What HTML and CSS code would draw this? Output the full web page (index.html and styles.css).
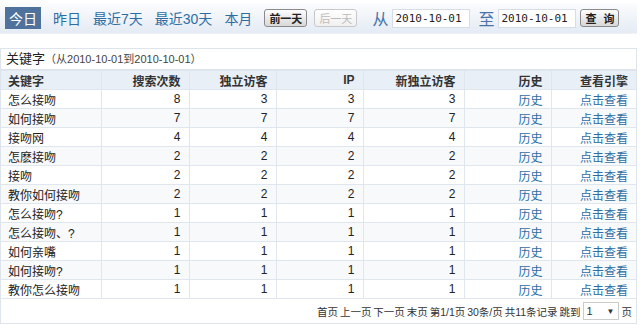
FILE: index.html
```html
<!DOCTYPE html>
<html lang="zh-CN">
<head>
  <meta charset="UTF-8" />
  <title>关键字统计</title>
  <link rel="stylesheet" href="styles.css">
</head>
<body>

<!-- 日期选择 -->
<div class="toolbar">
  <a class="range current">今日</a>
  <a class="range">昨日</a>
  <a class="range">最近7天</a>
  <a class="range">最近30天</a>
  <a class="range">本月</a>
  <button class="btn">前一天</button>
  <button class="btn" disabled>后一天</button>
  <span class="label">从</span>
  <input class="date" type="text" value="2010-10-01">
  <span class="label">至</span>
  <input class="date" type="text" value="2010-10-01">
  <button class="btn query">查 询</button>
</div>

<!-- 关键字列表 -->
<div class="panel">
  <div class="panel-title">关键字<small>（从2010-10-01到2010-10-01）</small></div>
  <table class="grid">
    <colgroup>
      <col style="width: 100px">
      <col style="width: 88px">
      <col style="width: 87px">
      <col style="width: 87px">
      <col style="width: 101px">
      <col style="width: 87px">
      <col>
    </colgroup>
    <thead>
      <tr>
        <th class="kw">关键字</th>
        <th>搜索次数</th>
        <th>独立访客</th>
        <th>IP</th>
        <th>新独立访客</th>
        <th>历史</th>
        <th>查看引擎</th>
      </tr>
    </thead>
    <tbody id="rows"></tbody>
  </table>
  <div class="pager">
    <span>首页 上一页 下一页 末页 第1/1页 30条/页 共11条记录 跳到</span>
    <span class="jump">1 <i>&#9660;</i></span>
    <span>页</span>
  </div>
</div>

<script>
  const keywords = [
    ["怎么接吻", 8, 3, 3, 3],
    ["如何接吻", 7, 7, 7, 7],
    ["接吻网", 4, 4, 4, 4],
    ["怎麽接吻", 2, 2, 2, 2],
    ["接吻", 2, 2, 2, 2],
    ["教你如何接吻", 2, 2, 2, 2],
    ["怎么接吻?", 1, 1, 1, 1],
    ["怎么接吻、?", 1, 1, 1, 1],
    ["如何亲嘴", 1, 1, 1, 1],
    ["如何接吻?", 1, 1, 1, 1],
    ["教你怎么接吻", 1, 1, 1, 1]
  ];

  let tbody = document.getElementById("rows");
  keywords.forEach((k, i) => {
    let tr = document.createElement("tr");
    if (i % 2 === 1) tr.className = "alt";
    tr.innerHTML = `
      <td class="kw">${k[0]}</td>
      <td>${k[1]}</td>
      <td>${k[2]}</td>
      <td>${k[3]}</td>
      <td>${k[4]}</td>
      <td><a>历史</a></td>
      <td><a>点击查看</a></td>
    `;
    tbody.appendChild(tr);
  });
</script>
</body>
</html>
```

FILE: styles.css
```css
body { margin: 0; background: #fff; font-family: "Liberation Sans", "Noto Sans CJK SC", sans-serif; font-size: 12px; color: #333; }
.toolbar { display: flex; align-items: center; height: 30px; margin: 3px 3px 0 0; padding-left: 5px; background: linear-gradient(#fbfcfe, #e4ebf4); border-bottom: 1px solid #eef2f7; white-space: nowrap; }
.toolbar > * { flex-shrink: 0; }
.range { font-size: 14px; color: #2e6da4; margin-right: 12px; }
.range.current { background: #4f729d; color: #fff; padding: 1px 4px; }
.btn { font-family: inherit; font-size: 11px; height: 18px; padding: 0 4px; margin-right: 7px; border: 1px solid #8a8a8a; border-radius: 3px; background: linear-gradient(#fdfdfd, #d8d8d8); color: #222; font-weight: bold; white-space: nowrap; }
.btn[disabled] { color: #bbb; border-color: #c8c8c8; background: linear-gradient(#fff, #f0f0f0); font-weight: normal; }
.label { font-size: 16px; color: #4a74a8; margin: 0 4px 0 8px; }
.date { width: 72px; height: 15px; padding: 1px 2px; border: 1px solid #d6dde6; font-family: "DejaVu Sans Mono", monospace; font-size: 11px; color: #222; }
.query { margin-left: 4px; letter-spacing: 2px; padding: 0 2px 0 4px; }
.panel { margin: 14px 3px 0 0; border: 1px solid #dde4ec; }
.panel-title { height: 20px; line-height: 20px; padding-left: 5px; font-size: 13px; color: #222; border-bottom: 1px solid #dde4ec; }
.panel-title small { font-size: 11px; color: #444; }
.grid { width: 100%; border-collapse: collapse; table-layout: fixed; }
.grid th, .grid td { height: 18px; padding: 0 8px; border: 1px solid #dfe6ee; text-align: right; font-weight: normal; color: #222; white-space: nowrap; }
.grid th { background: #e9eff7; font-weight: bold; color: #333; }
.grid th:first-child, .grid td:first-child { border-left: none; }
.grid th:last-child, .grid td:last-child { border-right: none; }
.grid .kw { text-align: left; padding-left: 7px; }
.grid tr.alt td { background: #f7f9fb; }
.grid a { color: #2e6da4; }
.pager { display: flex; align-items: center; justify-content: flex-end; height: 24px; padding-right: 4px; font-size: 10.5px; word-spacing: -1px; color: #333; white-space: nowrap; }
.jump { display: inline-flex; justify-content: space-between; align-items: center; width: 28px; height: 16px; margin: 0 3px 0 2px; padding: 0 3px; border: 1px solid #ccc; font-size: 11px; background: #fff; }
.jump i { font-style: normal; font-size: 8px; }
```
